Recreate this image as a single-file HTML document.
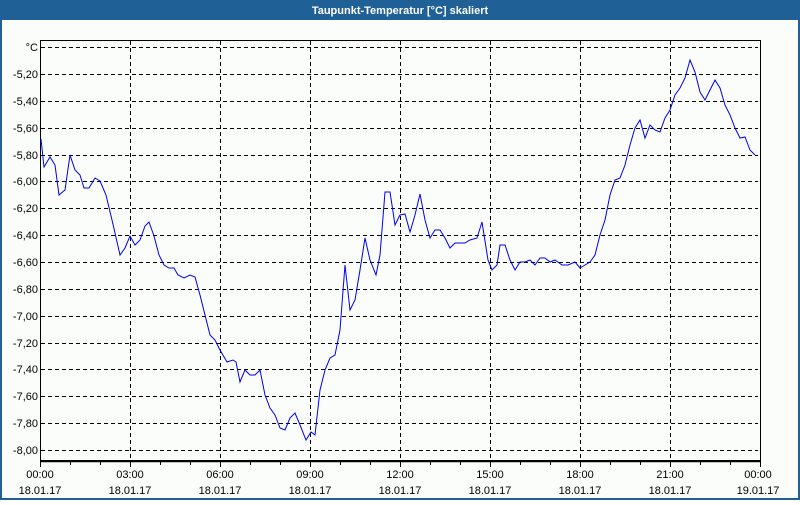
<!DOCTYPE html>
<html><head><style>
body{margin:0;width:800px;height:500px;overflow:hidden;background:#fff;font-family:"Liberation Sans",sans-serif}
</style></head><body>
<svg width="800" height="500" xmlns="http://www.w3.org/2000/svg" font-family="Liberation Sans, sans-serif" font-size="11">
<rect x="0" y="0" width="800" height="500" fill="#1f6096"/>
<rect x="2" y="20" width="796" height="478" fill="#fbfdfb"/>
<text x="400" y="14" fill="#fff" font-weight="bold" text-anchor="middle">Taupunkt-Temperatur [°C] skaliert</text>
<g stroke="#000" stroke-dasharray="4,3" stroke-width="1">
<path d="M41 47.5H758M41 74.5H758M41 101.5H758M41 128.5H758M41 155.5H758M41 181.5H758M41 208.5H758M41 235.5H758M41 262.5H758M41 289.5H758M41 316.5H758M41 343.5H758M41 369.5H758M41 396.5H758M41 423.5H758M41 450.5H758"/>
<path d="M130.5 41V460M220.5 41V460M310.5 41V460M400.5 41V460M490.5 41V460M580.5 41V460M670.5 41V460"/>
</g>
<rect x="40.5" y="40.5" width="720" height="420" fill="none" stroke="#000"/>
<path d="M40 461.5H761" stroke="#000" stroke-width="1.5"/>
<g stroke="#000"><path d="M70.5 461V465M100.5 461V465M130.5 461V467M160.5 461V465M190.5 461V465M220.5 461V467M250.5 461V465M280.5 461V465M310.5 461V467M340.5 461V465M370.5 461V465M400.5 461V467M430.5 461V465M460.5 461V465M490.5 461V467M520.5 461V465M550.5 461V465M580.5 461V467M610.5 461V465M640.5 461V465M670.5 461V467M700.5 461V465M730.5 461V465M760.5 461V467M40.5 461V467"/></g>
<polyline fill="none" stroke="#0000ee" stroke-width="1" points="41,139 44,167 50,157 55,165 59,195 65,190 70,155 75,170 80,175 84,188 89,188 95,178 100,181 106,195 112,220 120,255 125,248 130,236 135,245 140,240 145,226 149,222 154,236 159,255 164,265 169,268 174,268 178,275 184,278 190,275 195,277 200,295 205,315 210,335 215,340 220,350 227,362 233,360 236,362 240,382 245,370 250,375 255,375 260,370 265,395 270,408 275,415 280,428 285,430 290,418 295,413 300,425 306,440 311,432 315,435 320,390 325,370 330,358 335,355 340,330 345,265 350,310 355,300 360,270 365,238 370,260 376,275 380,255 385,192 390,192 395,225 400,215 405,214 410,232 415,215 420,194 425,220 430,238 435,230 440,230 445,238 450,248 455,243 460,243 465,243 470,240 477,238 482,222 488,260 492,270 497,265 500,245 505,245 510,260 515,270 520,262 525,262 530,260 535,265 540,258 545,258 550,262 555,260 562,265 568,265 575,262 580,268 585,265 590,262 595,255 600,235 605,220 610,195 615,180 620,178 625,165 630,145 635,128 640,120 645,138 650,125 655,130 660,132 665,118 670,110 675,95 680,88 685,78 690,60 695,72 700,92 705,100 710,90 715,80 720,88 725,105 730,115 735,128 740,138 745,137 750,150 755,155"/>
<g text-anchor="end" fill="#000">
<text x="38" y="51">°C</text>
<text x="38" y="78">-5,20</text><text x="38" y="105">-5,40</text><text x="38" y="132">-5,60</text><text x="38" y="159">-5,80</text><text x="38" y="185">-6,00</text><text x="38" y="212">-6,20</text><text x="38" y="239">-6,40</text><text x="38" y="266">-6,60</text><text x="38" y="293">-6,80</text><text x="38" y="320">-7,00</text><text x="38" y="347">-7,20</text><text x="38" y="373">-7,40</text><text x="38" y="400">-7,60</text><text x="38" y="427">-7,80</text><text x="38" y="454">-8,00</text>
</g>
<g text-anchor="middle" fill="#000">
<text x="40" y="478">00:00</text><text x="40" y="494">18.01.17</text>
<text x="130" y="478">03:00</text><text x="130" y="494">18.01.17</text>
<text x="220" y="478">06:00</text><text x="220" y="494">18.01.17</text>
<text x="310" y="478">09:00</text><text x="310" y="494">18.01.17</text>
<text x="400" y="478">12:00</text><text x="400" y="494">18.01.17</text>
<text x="490" y="478">15:00</text><text x="490" y="494">18.01.17</text>
<text x="580" y="478">18:00</text><text x="580" y="494">18.01.17</text>
<text x="670" y="478">21:00</text><text x="670" y="494">18.01.17</text>
<text x="758" y="478">00:00</text><text x="758" y="494">19.01.17</text>
</g>
</svg>
</body></html>
